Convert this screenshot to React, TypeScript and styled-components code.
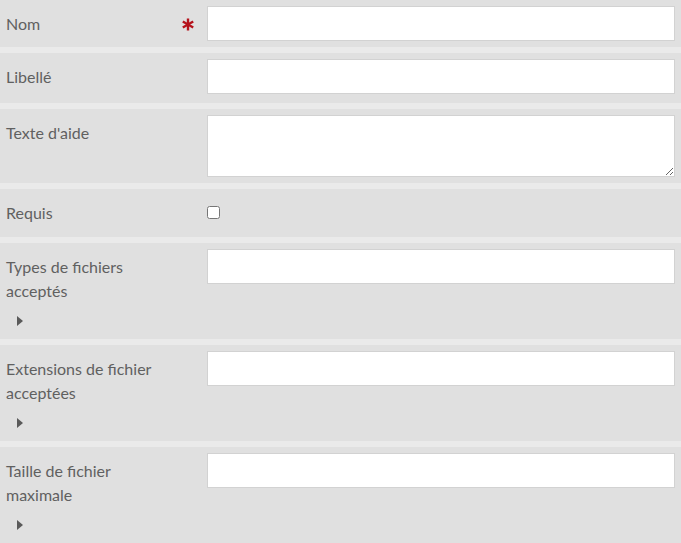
import React from "react";
import styled, { createGlobalStyle } from "styled-components";

const Global = createGlobalStyle`
  html, body { margin: 0; padding: 0; background: #eaeaea; }
  body { font-family: Lato, "Open Sans", sans-serif; }
  * { box-sizing: border-box; }
`;

const List = styled.div`
  display: flex;
  flex-direction: column;
  gap: 6px;
  width: 681px;
`;

const Row = styled.div<{ $pb?: number }>`
  display: grid;
  grid-template-columns: 201px 1fr;
  align-items: start;
  background: #e0e0e0;
  padding: 6px 6px ${(p) => p.$pb ?? 6}px 6px;
`;

const LabelCell = styled.div`
  display: flex;
  flex-direction: column;
  padding-top: 6px;
`;

const LabelLine = styled.div`
  display: flex;
  align-items: center;
  justify-content: space-between;
`;

const Label = styled.label`
  font-size: 16px;
  line-height: 24px;
  color: #606060;
  max-width: 170px;
`;

const Star = styled.svg`
  width: 12px;
  height: 13px;
  margin-right: 13px;
  flex: none;
`;

const Toggle = styled.div`
  height: 24px;
  margin-top: 6px;
  padding-left: 11px;
  display: flex;
  align-items: center;
`;

const Arrow = styled.span`
  width: 0;
  height: 0;
  border-top: 5px solid transparent;
  border-bottom: 5px solid transparent;
  border-left: 6px solid #5a5a5a;
`;

const TextInput = styled.input`
  display: block;
  width: 100%;
  height: 35px;
  margin: 0;
  border: 1px solid #d2d2d2;
  background: #fff;
  font-family: inherit;
  font-size: 15px;
  padding: 4px 8px;
  outline: none;
`;

const TextArea = styled.textarea`
  display: block;
  width: 100%;
  height: 62px;
  margin: 0;
  border: 1px solid #d2d2d2;
  background: #fff;
  font-family: inherit;
  font-size: 15px;
  padding: 4px 8px;
  outline: none;
`;

const CheckCell = styled.div`
  padding-top: 11px;
  height: 36px;
`;

const Check = styled.input`
  display: block;
  width: 13px;
  height: 13px;
  margin: 0;
`;

const Asterisk = () => (
  <Star viewBox="0 0 12 13">
    <g stroke="#b5121b" strokeWidth="2.4" strokeLinecap="butt">
      <line x1="6" y1="0.5" x2="6" y2="12.5" />
      <line x1="0.8" y1="3.5" x2="11.2" y2="9.5" />
      <line x1="0.8" y1="9.5" x2="11.2" y2="3.5" />
    </g>
  </Star>
);

const Collapsible = () => (
  <Toggle>
    <Arrow />
  </Toggle>
);

export default function App() {
  return (
    <>
      <Global />
      <List>
        <Row>
          <LabelCell>
            <LabelLine>
              <Label>Nom</Label>
              <Asterisk />
            </LabelLine>
          </LabelCell>
          <TextInput type="text" />
        </Row>
        <Row $pb={9}>
          <LabelCell>
            <Label>Libellé</Label>
          </LabelCell>
          <TextInput type="text" />
        </Row>
        <Row>
          <LabelCell>
            <Label>Texte d'aide</Label>
          </LabelCell>
          <TextArea />
        </Row>
        <Row>
          <LabelCell>
            <Label>Requis</Label>
          </LabelCell>
          <CheckCell>
            <Check type="checkbox" />
          </CheckCell>
        </Row>
        <Row>
          <LabelCell>
            <Label>Types de fichiers acceptés</Label>
            <Collapsible />
          </LabelCell>
          <TextInput type="text" />
        </Row>
        <Row>
          <LabelCell>
            <Label>Extensions de fichier acceptées</Label>
            <Collapsible />
          </LabelCell>
          <TextInput type="text" />
        </Row>
        <Row>
          <LabelCell>
            <Label>Taille de fichier maximale</Label>
            <Collapsible />
          </LabelCell>
          <TextInput type="text" />
        </Row>
      </List>
    </>
  );
}
